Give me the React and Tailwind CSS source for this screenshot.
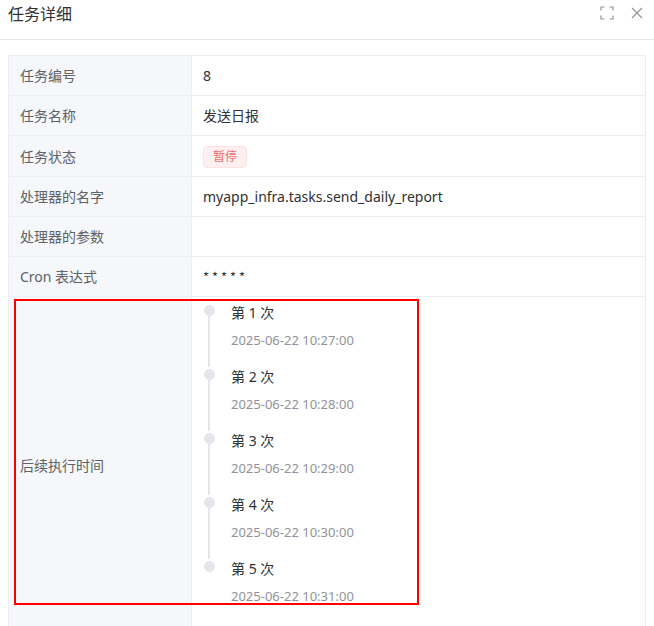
import React from 'react'

const rows = [
  { label: '任务编号', value: '8' },
  { label: '任务名称', value: '发送日报' },
  { label: '任务状态', tag: '暂停' },
  { label: '处理器的名字', value: 'myapp_infra.tasks.send_daily_report' },
  { label: '处理器的参数', value: '' },
  { label: 'Cron 表达式', value: '* * * * *', cjk: true },
]

const nextRuns = [
  '2025-06-22 10:27:00',
  '2025-06-22 10:28:00',
  '2025-06-22 10:29:00',
  '2025-06-22 10:30:00',
  '2025-06-22 10:31:00',
]

const FullscreenIcon = () => (
  <svg width="14" height="14" viewBox="0 0 14 14" fill="none" stroke="#909399" strokeWidth="1.2">
    <path d="M1 4.5V1h3.5M9.5 1H13v3.5M13 9.5V13H9.5M4.5 13H1V9.5" />
  </svg>
)

const CloseIcon = () => (
  <svg width="14" height="14" viewBox="0 0 14 14" fill="none" stroke="#909399" strokeWidth="1.2">
    <path d="M2 2l10 10M12 2L2 12" />
  </svg>
)

const Timeline = () => (
  <div className="flex flex-col">
    {nextRuns.map((t, i) => (
      <div key={t} className="flex">
        <div className="flex w-3 flex-col items-center pt-[2px]">
          <div className="h-[11px] w-[11px] shrink-0 rounded-full bg-[#e4e7ed]" />
          {i < nextRuns.length - 1 && <div className="w-[2px] flex-1 bg-[#e4e7ed]" />}
        </div>
        <div className="pb-[18px] pl-4">
          <div className="text-[14px] leading-[20px] text-[#303133]">第 {i + 1} 次</div>
          <div className="mt-2 text-[13px] leading-[18px] text-[#909399]">{t}</div>
        </div>
      </div>
    ))}
  </div>
)

export default function App() {
  return (
    <div
      className="relative h-[626px] w-[654px] overflow-hidden bg-white"
      style={{ fontFamily: '"Noto Sans", "Noto Sans CJK SC", sans-serif' }}
    >
      {/* Header */}
      <div className="flex h-10 items-start justify-between border-b border-[#e4e7ed] pl-2 pr-[10px] pt-[2px]">
        <h2 className="text-[16px] leading-6 text-[#303133]">任务详细</h2>
        <div className="flex items-center gap-4 pt-[4px]">
          <FullscreenIcon />
          <CloseIcon />
        </div>
      </div>

      {/* Body */}
      <div className="px-2 pt-[15px]">
        <table className="w-full border-collapse text-[14px]">
          <tbody>
            {rows.map((r) => (
              <tr key={r.label} className={r.tag ? 'h-[41px]' : 'h-10'}>
                <td className="w-[183px] border border-[#ebeef5] bg-[#f5f7fa] px-[11px] text-[#606266]">{r.label}</td>
                <td className="border border-[#ebeef5] px-[11px] text-[#303133]">
                  {r.tag ? (
                    <span className="inline-flex h-[22px] items-center rounded border border-[#fde2e2] bg-[#fef0f0] px-[9px] text-[12px] text-[#f56c6c]">
                      {r.tag}
                    </span>
                  ) : r.cjk ? (
                    <span className="text-[13px]" style={{ fontFamily: '"Noto Sans CJK SC", sans-serif' }}>{r.value}</span>
                  ) : (
                    r.value
                  )}
                </td>
              </tr>
            ))}
            <tr>
              <td className="w-[183px] border border-[#ebeef5] bg-[#f5f7fa] px-[11px] text-[#606266]">后续执行时间</td>
              <td className="border border-[#ebeef5] px-[11px] pb-[11px] pt-[6px]">
                <Timeline />
              </td>
            </tr>
          </tbody>
        </table>
      </div>

      {/* Highlight box */}
      <div className="pointer-events-none absolute left-[14px] top-[299px] h-[306px] w-[405px] border-2 border-[#ff0000]" />
    </div>
  )
}
